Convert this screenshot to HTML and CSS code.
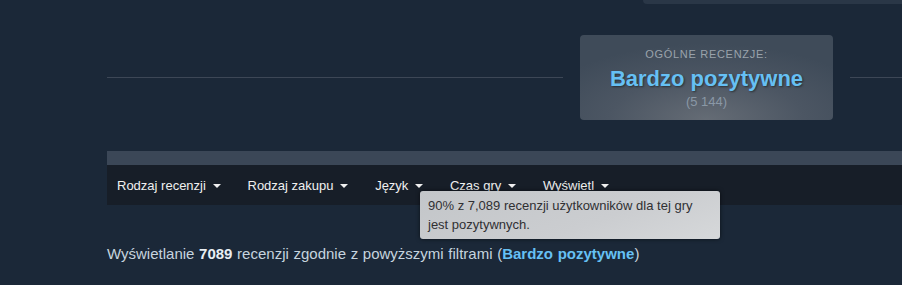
FILE: index.html
```html
<!DOCTYPE html>
<html lang="pl">
<head>
  <meta charset="UTF-8">
  <title>Recenzje</title>
  <link rel="stylesheet" href="styles.css">
</head>
<body>
  <div class="top-strip"></div>

  <div class="summary-row">
    <div class="summary-line"></div>
    <div class="summary-box">
      <div class="summary-title">Ogólne recenzje:</div>
      <div class="summary-rating">Bardzo pozytywne</div>
      <div class="summary-count">(5 144)</div>
    </div>
    <div class="summary-line summary-line-end"></div>
  </div>

  <div class="filters">
    <div class="filters-top"></div>
    <div class="filters-bar">
      <div class="filter">Rodzaj recenzji <span class="arrow"></span></div>
      <div class="filter">Rodzaj zakupu <span class="arrow"></span></div>
      <div class="filter">Język <span class="arrow"></span></div>
      <div class="filter">Czas gry <span class="arrow"></span></div>
      <div class="filter">Wyświetl <span class="arrow"></span></div>
    </div>
    <div class="tooltip">90% z 7,089 recenzji użytkowników dla tej gry jest pozytywnych.</div>
  </div>

  <div class="results">
    Wyświetlanie <b>7089</b> recenzji zgodnie z powyższymi filtrami (<span class="results-rating">Bardzo pozytywne</span>)
  </div>
</body>
</html>
```

FILE: styles.css
```css
body {
  margin: 0;
  background-color: #1b2838;
  font-family: "Liberation Sans", Arial, sans-serif;
  color: #c6d4df;
}

.top-strip {
  width: 259px;
  height: 4px;
  margin-left: auto;
  background-color: #2a3747;
  border-bottom-left-radius: 4px;
}

.summary-row {
  display: flex;
  align-items: center;
  margin-top: 31px;
  padding-left: 107px;
}

.summary-line {
  flex: 1;
  height: 1px;
  background-color: #3d4756;
}

.summary-line-end {
  flex: none;
  width: 52px;
}

.summary-box {
  width: 253px;
  height: 85px;
  margin: 0 17px;
  box-sizing: border-box;
  padding-top: 12px;
  border-radius: 4px;
  text-align: center;
  background: radial-gradient(ellipse 70% 90% at 50% 100%, #656c75 0%, #4c5663 55%, #3f4b59 100%);
}

.summary-title {
  font-size: 11px;
  letter-spacing: 0.7px;
  text-transform: uppercase;
  color: #9aa3ab;
  line-height: 14px;
}

.summary-rating {
  font-size: 22px;
  font-weight: bold;
  color: #66c0f4;
  line-height: 26px;
  margin-top: 5px;
  text-shadow: 1px 1px 2px rgba(0, 0, 0, 0.45);
}

.summary-count {
  font-size: 13px;
  color: #8a98a6;
  line-height: 15px;
  margin-top: 2px;
}

.filters {
  position: relative;
  margin-top: 31px;
  margin-left: 107px;
}

.filters-top {
  height: 14px;
  background-color: #3b4757;
}

.filters-bar {
  display: flex;
  align-items: center;
  gap: 27px;
  height: 40px;
  padding-left: 10px;
  background-color: #171e28;
  font-size: 13px;
  color: #f0f0f0;
}

.arrow {
  display: inline-block;
  width: 0;
  height: 0;
  margin-left: 3px;
  vertical-align: 2px;
  border-left: 4px solid transparent;
  border-right: 4px solid transparent;
  border-top: 4px solid #f0f0f0;
}

.tooltip {
  position: absolute;
  left: 313px;
  top: 40px;
  width: 300px;
  height: 48px;
  box-sizing: border-box;
  padding: 5px 8px;
  border-radius: 3px;
  font-size: 13px;
  line-height: 19px;
  color: #303033;
  background: linear-gradient(160deg, #c3c6c9 0%, #cbcdd0 60%, #d6d8da 100%);
  box-shadow: 0 0 4px rgba(0, 0, 0, 0.6);
}

.results {
  margin-top: 40px;
  margin-left: 107px;
  font-size: 15px;
  word-spacing: 0.5px;
}

.results b {
  color: #e8eef3;
}

.results-rating {
  font-weight: bold;
  color: #66c0f4;
}
```
